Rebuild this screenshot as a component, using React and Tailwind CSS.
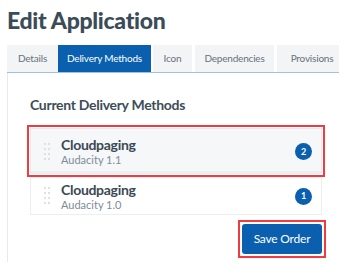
import React from 'react';

const tabs = [
  { name: 'Details', width: 'w-[51px]', gap: '' },
  { name: 'Delivery Methods', width: 'w-[93px]', gap: '', active: true },
  { name: 'Icon', width: 'w-[39px]', gap: 'ml-[2px]' },
  { name: 'Dependencies', width: 'w-[79px]', gap: 'ml-[3px]' },
  { name: 'Provisions', width: 'w-[70px]', gap: 'ml-[3px]' },
];

const methods = [
  { id: 2, name: 'Cloudpaging', version: 'Audacity 1.1', selected: true },
  { id: 1, name: 'Cloudpaging', version: 'Audacity 1.0' },
];

const DragHandle = () => (
  <svg width="6" height="18" viewBox="0 0 6 18" className="shrink-0">
    {[1, 6, 11, 16].map((y) => (
      <g key={y} fill="#cfd4d9">
        <circle cx="1" cy={y} r="0.9" />
        <circle cx="5" cy={y} r="0.9" />
      </g>
    ))}
  </svg>
);

const App = () => {
  return (
    <div className="w-[339px] h-[274px] bg-white overflow-hidden font-['Lato',sans-serif]">
      <h1 className="pl-[7px] pt-[6px] h-[45px] text-[23px] leading-[28px] font-black text-[#3b4c58] tracking-[-0.3px]">
        Edit Application
      </h1>

      <div className="ml-[7px] flex h-[28px] border-b border-[#9cc3e6]">
        {tabs.map((tab) => (
          <div
            key={tab.name}
            className={`${tab.width} ${tab.gap} shrink-0 flex items-center justify-center text-[10px] tracking-[-0.2px] ${
              tab.active ? 'bg-[#0a60ae] text-white' : 'bg-[#f2f4f6] text-[#66727d]'
            }`}
          >
            {tab.name}
          </div>
        ))}
      </div>

      <div className="ml-[7px] h-[189px] border-l border-[#e7e9ec] pl-[22px] pr-[10px]">
        <h2 className="pt-[23px] h-[55px] text-[14px] leading-[18px] font-bold text-[#3d4d59] tracking-[-0.3px]">
          Current Delivery Methods
        </h2>

        <div className="flex flex-col gap-[3px] w-[292px]">
          {methods.map((m) => (
            <div
              key={m.id}
              className={`flex items-center pl-[13px] pr-[9px] border ${
                m.selected
                  ? 'h-[46px] bg-[#f6f7f8] border-[#e6e8eb] border-b-[3px] border-b-[#eceef0] outline-2 outline-offset-[1px] outline-[#ef3b41] pt-[3px]'
                  : 'h-[38px] bg-white border-[#eceef0]'
              }`}
            >
              <DragHandle />
              <div className="ml-[11px] flex-1 flex flex-col">
                <span className="text-[14px] leading-[17px] font-bold text-[#3a4955] tracking-[-0.3px]">{m.name}</span>
                <span className="text-[11px] leading-[14px] text-[#7d8c99]">{m.version}</span>
              </div>
              <span className="w-[17px] h-[17px] rounded-full bg-[#0a60ae] text-white text-[9px] font-bold flex items-center justify-center">
                {m.id}
              </span>
            </div>
          ))}
        </div>

        <div className="flex justify-end w-[296px] mt-[5px]">
          <div className="border-2 border-[#ef3b41] p-[2px]">
            <button className="w-[80px] h-[30px] rounded-[3px] bg-[#0a60ae] text-white text-[12px] tracking-[-0.2px] flex items-center justify-center">
              Save Order
            </button>
          </div>
        </div>
      </div>
    </div>
  );
};

export default App;
